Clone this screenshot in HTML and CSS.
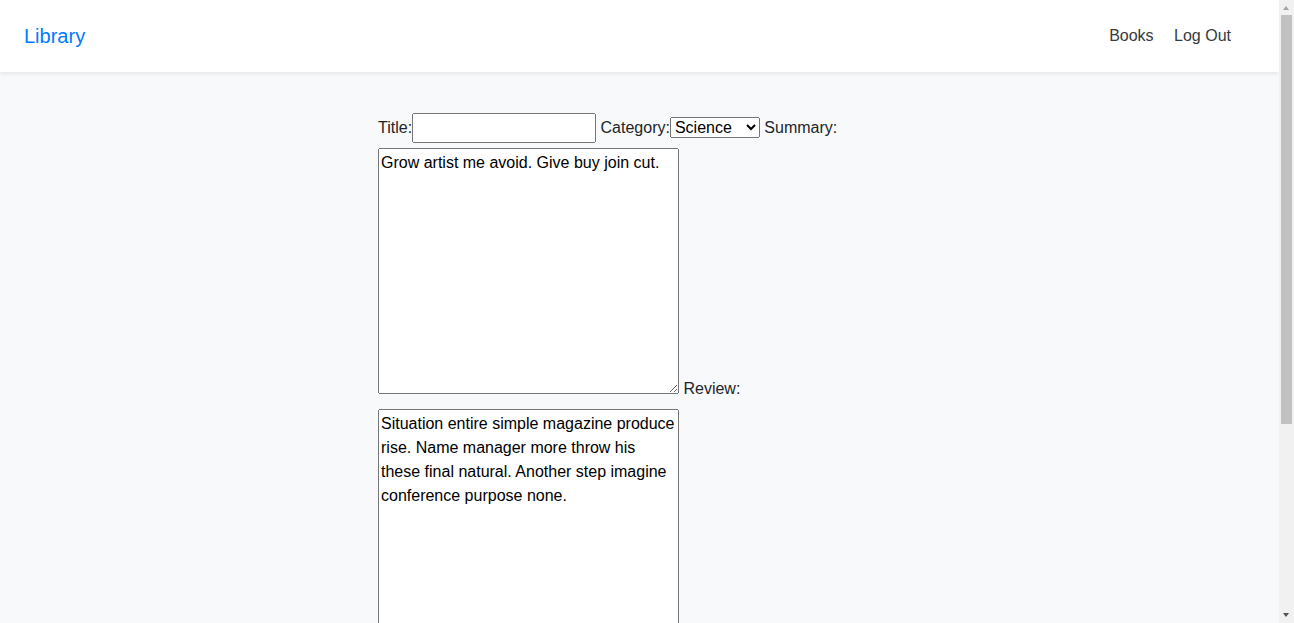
FILE: index.html
```html
<!DOCTYPE html>
<html lang="en">
<head>
<meta charset="utf-8">
<title>Library</title>
<link rel="stylesheet" href="styles.css">
</head>
<body>
<div class="page">
  <nav class="navbar">
    <a class="brand" href="#">Library</a>
    <ul class="nav">
      <li class="nav-item"><a class="nav-link" href="#">Books</a></li>
      <li class="nav-item"><a class="nav-link" href="#">Log Out</a></li>
    </ul>
  </nav>
  <main class="main">
    <form class="book-form">
      <label for="title">Title:</label><input class="text-input" id="title" type="text">
      <label for="category">Category:</label><select class="select" id="category">
        <option>Science</option>
        <option>Fiction</option>
        <option>History</option>
      </select>
      <label for="summary">Summary:</label>
      <textarea class="area" id="summary" rows="10">Grow artist me avoid. Give buy join cut.</textarea>
      <label for="review">Review:</label>
      <textarea class="area" id="review" rows="10">Situation entire simple magazine produce rise. Name manager more throw his these final natural. Another step imagine conference purpose none.</textarea>
      <button class="submit" type="submit">Save</button>
    </form>
  </main>
</div>
<div class="scrollbar" aria-hidden="true">
  <div class="arrow arrow-up"></div>
  <div class="thumb"></div>
  <div class="arrow arrow-down"></div>
</div>
</body>
</html>
```

FILE: styles.css
```css
*, *::before, *::after {
  box-sizing: border-box;
}
html, body {
  margin: 0;
  padding: 0;
}
body {
  font-family: "Liberation Sans", Arial, sans-serif;
  font-size: 16px;
  line-height: 1.5;
  color: #212529;
  background: #f8f9fa;
}
.page {
  margin-right: 15px;
}
.navbar {
  display: flex;
  align-items: center;
  justify-content: space-between;
  height: 72px;
  padding: 0 40px 0 24px;
  background: #fff;
  box-shadow: 0 2px 4px rgba(0, 0, 0, 0.075);
  position: relative;
}
.brand {
  font-size: 20px;
  line-height: 30px;
  color: #007bff;
  text-decoration: none;
}
.nav {
  list-style: none;
  margin: 0;
  padding: 0;
}
.nav-item {
  display: inline-block;
}
.nav-link {
  display: block;
  padding: 8px 8px;
  color: #343a40;
  text-decoration: none;
}
.main {
  width: 523px;
  margin: 41px auto 0;
}
.book-form label {
  display: inline-block;
  margin-bottom: 8px;
}
.book-form input,
.book-form select,
.book-form textarea,
.book-form button {
  font-family: inherit;
  font-size: inherit;
  line-height: inherit;
  margin: 0;
}
.text-input {
  width: 184px;
}
.select {
  width: 90px;
}
.area {
  width: 301px;
}
.scrollbar {
  position: fixed;
  top: 0;
  right: 0;
  width: 15px;
  height: 100vh;
  background: #f1f1f1;
}
.thumb {
  position: absolute;
  top: 15px;
  left: 2px;
  width: 11px;
  height: 409px;
  background: #c1c1c1;
}
.arrow {
  position: absolute;
  left: 4px;
  width: 0;
  height: 0;
  border-left: 3.5px solid transparent;
  border-right: 3.5px solid transparent;
}
.arrow-up {
  top: 6px;
  border-bottom: 4px solid #a3a3a3;
}
.arrow-down {
  bottom: 6px;
  border-top: 4px solid #505050;
}
```
